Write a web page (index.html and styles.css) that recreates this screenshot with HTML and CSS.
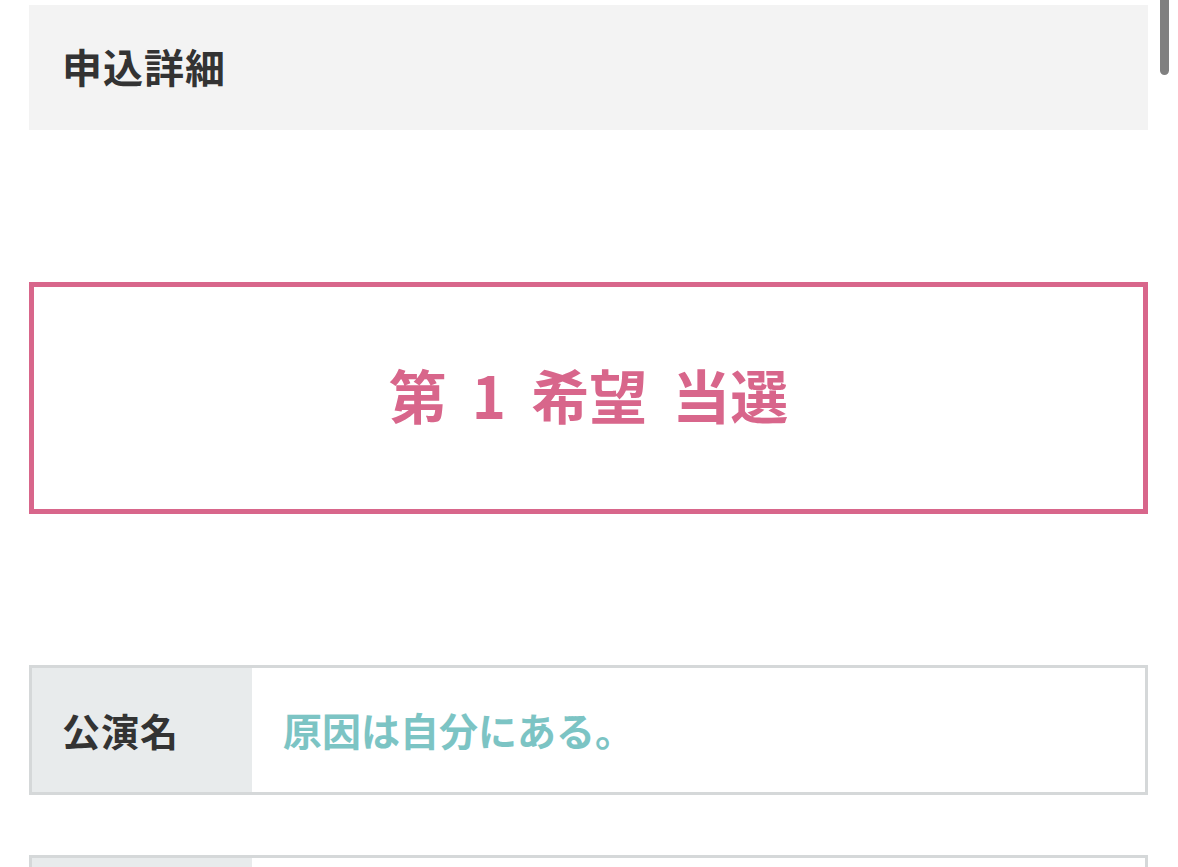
FILE: index.html
```html
<!DOCTYPE html>
<html lang="ja">
<head>
<meta charset="utf-8">
<link rel="stylesheet" href="styles.css">
</head>
<body>
<div class="page">
  <div class="section-head">申込詳細</div>
  <div class="result-box"><span class="result-text">第 1 希望 当選</span></div>
  <div class="rows">
    <div class="row">
      <div class="label">公演名</div>
      <div class="value">原因は自分にある。</div>
    </div>
    <div class="row">
      <div class="label"></div>
      <div class="value"></div>
    </div>
  </div>
</div>
<div class="scroll-indicator"></div>
</body>
</html>
```
FILE: styles.css
```css
html, body {
  margin: 0;
  padding: 0;
  background: #ffffff;
  overflow: hidden;
  height: 867px;
}
body {
  font-family: "Noto Sans CJK JP", "Noto Sans", sans-serif;
  color: #333333;
}
.page {
  padding: 5px 30px 0 29px;
  display: flex;
  flex-direction: column;
}
.section-head {
  background: #f3f3f3;
  height: 125px;
  display: flex;
  align-items: center;
  padding-left: 33px;
  padding-bottom: 4px;
  box-sizing: border-box;
  font-size: 40px;
  font-weight: 700;
  color: #333333;
  letter-spacing: 1px;
}
.result-box {
  margin-top: 152px;
  height: 222px;
  border: 5px solid #d8668b;
  display: flex;
  align-items: center;
  justify-content: center;
}
.result-text {
  font-size: 58px;
  font-weight: 700;
  color: #d8668b;
  word-spacing: 12px;
  margin-top: -8px;
}
.rows {
  margin-top: 151px;
  display: flex;
  flex-direction: column;
  gap: 60px;
}
.row {
  display: flex;
  height: 124px;
  border: 3px solid #d5d8d9;
}
.label {
  width: 220px;
  background: #e8ebec;
  display: flex;
  align-items: center;
  padding-left: 30px;
  padding-bottom: 2px;
  box-sizing: border-box;
  font-size: 38px;
  font-weight: 700;
  color: #333333;
  letter-spacing: 1px;
}
.value {
  flex: 1;
  display: flex;
  align-items: center;
  padding-left: 31px;
  padding-bottom: 2px;
  font-size: 39px;
  font-weight: 700;
  color: #7cc4c4;
}
.scroll-indicator {
  position: absolute;
  top: 0;
  left: 1160px;
  width: 9px;
  height: 75px;
  background: #808080;
  border-radius: 0 0 5px 5px;
}
```
